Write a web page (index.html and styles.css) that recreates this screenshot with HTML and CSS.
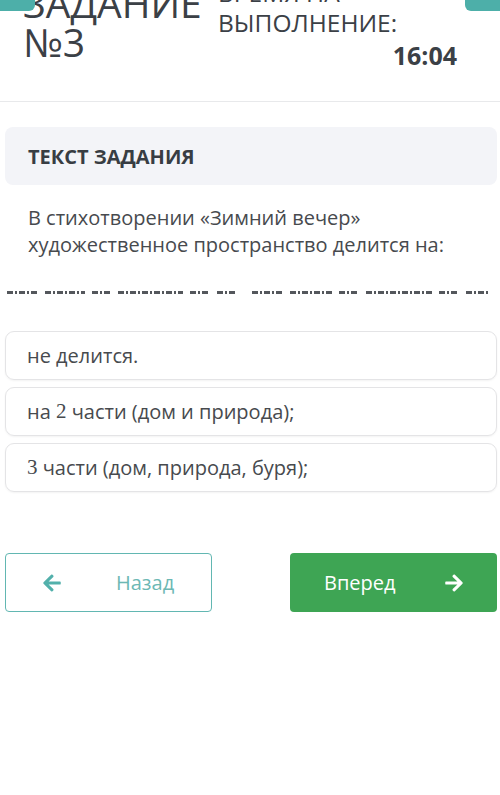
FILE: index.html
```html
<!DOCTYPE html>
<html lang="ru">
<head>
<meta charset="utf-8">
<link rel="stylesheet" href="styles.css">
</head>
<body>
<div class="tab tab-left"></div>
<div class="tab tab-right"></div>
<header class="header">
  <h1 class="title">ЗАДАНИЕ<br>№3</h1>
  <div class="timer">
    <div class="timer-label">ВРЕМЯ НА<br>ВЫПОЛНЕНИЕ:</div>
    <div class="timer-value">16:04</div>
  </div>
</header>
<main class="content">
  <div class="section-head">ТЕКСТ ЗАДАНИЯ</div>
  <p class="question">В стихотворении «Зимний вечер» художественное пространство делится на:</p>
  <div class="hidden-line">
    <span class="g" style="width:31px"></span>
    <span class="g" style="width:40px"></span>
    <span class="g" style="width:19px"></span>
    <span class="g" style="width:65px"></span>
    <span class="g" style="width:20px"></span>
    <span class="g" style="width:20px"></span>
    <span class="g gap" style="width:31px"></span>
    <span class="g" style="width:42px"></span>
    <span class="g" style="width:20px"></span>
    <span class="g" style="width:66px"></span>
    <span class="g" style="width:20px"></span>
    <span class="g" style="width:23px"></span>
  </div>
  <div class="options">
    <div class="option">не делится.</div>
    <div class="option">на <span class="num">2</span> части (дом и природа);</div>
    <div class="option"><span class="num">3</span> части (дом, природа, буря);</div>
  </div>
  <div class="nav">
    <button class="btn btn-back">
      <svg class="arrow" viewBox="0 0 448 512"><path transform="translate(448 0) scale(-1 1)" d="M190.5 66.9l22.2-22.2c9.4-9.4 24.6-9.4 33.9 0L441 239c9.4 9.4 9.4 24.6 0 33.9L246.6 467.3c-9.4 9.4-24.6 9.4-33.9 0l-22.2-22.2c-9.5-9.5-9.3-25 .4-34.3L311.4 296H24c-13.3 0-24-10.7-24-24v-32c0-13.3 10.7-24 24-24h287.4L190.9 101.2c-9.8-9.3-10-24.8-.4-34.3z"/></svg>
      <span>Назад</span>
    </button>
    <button class="btn btn-next">
      <span>Вперед</span>
      <svg class="arrow" viewBox="0 0 448 512"><path d="M190.5 66.9l22.2-22.2c9.4-9.4 24.6-9.4 33.9 0L441 239c9.4 9.4 9.4 24.6 0 33.9L246.6 467.3c-9.4 9.4-24.6 9.4-33.9 0l-22.2-22.2c-9.5-9.5-9.3-25 .4-34.3L311.4 296H24c-13.3 0-24-10.7-24-24v-32c0-13.3 10.7-24 24-24h287.4L190.9 101.2c-9.8-9.3-10-24.8-.4-34.3z"/></svg>
    </button>
  </div>
</main>
</body>
</html>
```

FILE: styles.css
```css
* { box-sizing: border-box; }
html, body { margin: 0; padding: 0; background: #fff; }
body {
  font-family: "Open Sans", "Noto Sans", sans-serif;
  color: #3b4046;
  width: 500px;
  overflow: hidden;
}
.tab {
  position: absolute;
  top: 0;
  width: 35px;
  height: 11px;
  background: #4dafa9;
  z-index: 2;
}
.tab-left { left: 0; border-bottom-right-radius: 6px; }
.tab-right { right: 0; border-bottom-left-radius: 6px; }

.header {
  display: flex;
  align-items: flex-start;
  margin-top: -22px;
  height: 124px;
  padding: 0 43px 0 23px;
  border-bottom: 1.5px solid #e8e9eb;
}
.title {
  margin: 5px 0 0 0;
  font-size: 39px;
  line-height: 39px;
  font-weight: 400;
  color: #3b4046;
  width: 195px;
}
.timer {
  flex: 1;
  display: flex;
  flex-direction: column;
}
.timer-label {
  font-size: 24.5px;
  line-height: 30px;
  color: #3b4046;
}
.timer-value {
  margin-top: 2px;
  align-self: flex-end;
  font-size: 25px;
  line-height: 30px;
  font-weight: 700;
  color: #3b4046;
}

.content {
  padding: 25px 3px 0 5px;
}
.section-head {
  background: #f3f4f8;
  border-radius: 8px;
  height: 58px;
  padding: 0 23px;
  display: flex;
  align-items: center;
  font-size: 20px;
  font-weight: 700;
  color: #383d43;
}
.question {
  margin: 19px 0 0 0;
  padding: 0 23px;
  font-size: 20px;
  line-height: 27px;
  color: #474a4e;
}
.hidden-line {
  display: flex;
  gap: 7px;
  margin: 33px 0 0 2px;
  height: 3px;
}
.g {
  display: block;
  height: 3px;
  background: repeating-linear-gradient(90deg, #54575c 0 6px, transparent 6px 8px, #54575c 8px 10px, transparent 10px 12px);
}
.g.gap { margin-left: 8px; }

.options {
  margin-top: 37px;
  display: flex;
  flex-direction: column;
  gap: 7px;
}
.option {
  height: 49px;
  border: 1.5px solid #e4e4e6;
  border-radius: 9px;
  box-shadow: 0 1px 2px rgba(0,0,0,0.05);
  display: flex;
  align-items: center;
  padding: 0 21px;
  font-size: 20px;
  color: #474a4e;
  white-space: pre;
}
.num {
  font-family: "Liberation Serif", "DejaVu Serif", serif;
  font-size: 21px;
}

.nav {
  margin-top: 61px;
  display: flex;
  justify-content: space-between;
}
.btn {
  width: 207px;
  height: 59px;
  border-radius: 4px;
  font-family: "Open Sans", sans-serif;
  font-size: 20px;
  display: flex;
  align-items: center;
  padding: 0;
  cursor: pointer;
}
.btn-back {
  background: #fff;
  border: 1.5px solid #62b7b2;
  color: #6cb8b4;
  padding-left: 37px;
}
.btn-back .arrow { fill: #52b0ab; margin-right: 55px; }
.btn-next {
  background: #3ea554;
  border: none;
  color: #fff;
  padding-left: 34px;
  width: 207px;
}
.btn-next .arrow { fill: #fff; margin-left: 49px; }
.arrow {
  width: 18px;
  height: 20px;
}
```
